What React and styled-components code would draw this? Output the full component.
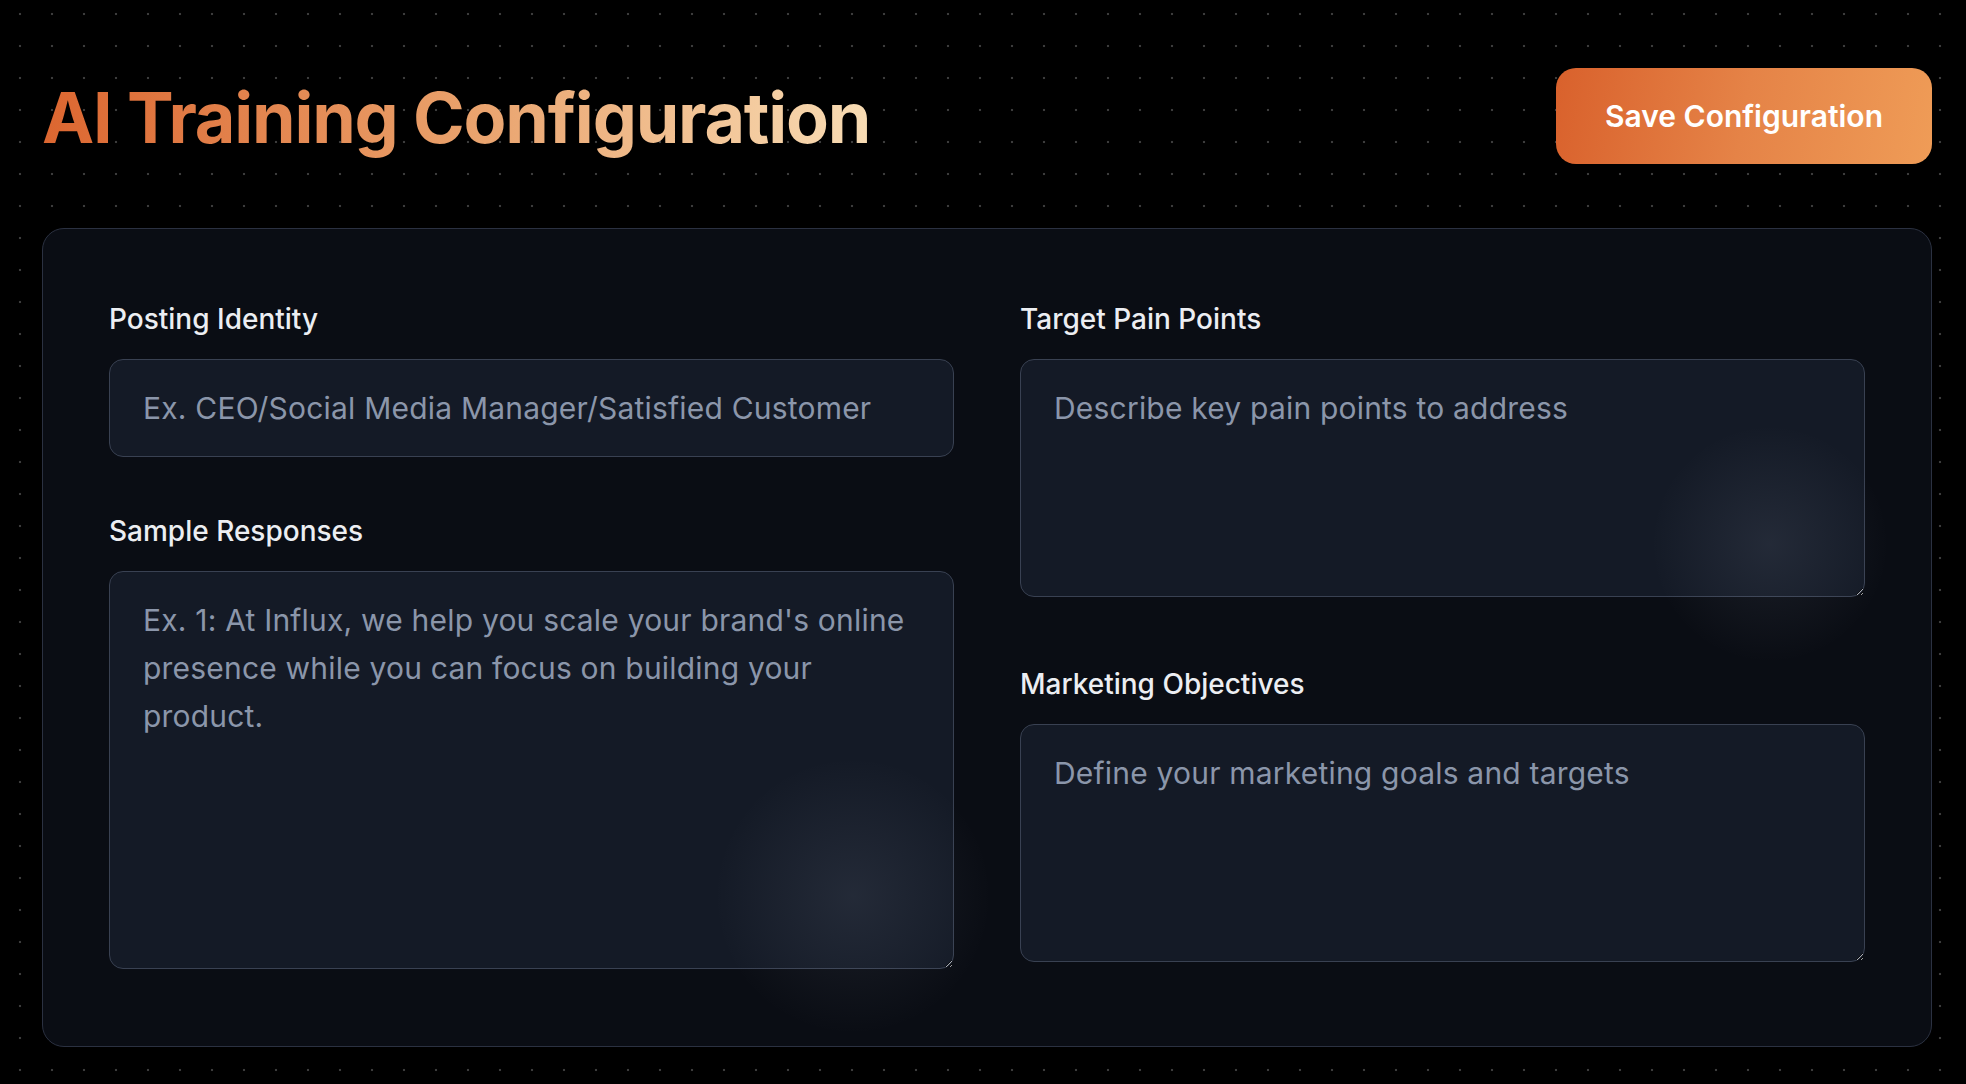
import React from "react";
import styled, { createGlobalStyle } from "styled-components";

const GlobalStyle = createGlobalStyle`
  html, body {
    margin: 0;
    padding: 0;
    background: #000;
  }
  body {
    font-family: Inter, "Noto Sans", sans-serif;
  }
  * {
    box-sizing: border-box;
  }
`;

const Page = styled.div`
  min-height: 100vh;
  background-color: #000;
  background-image: radial-gradient(circle at center, #3c3c3c 0, #3c3c3c 1px, transparent 1.6px);
  background-size: 32px 32px;
  background-position: 4px -2px;
  padding: 68px 34px 20px 42px;
`;

const Header = styled.header`
  display: flex;
  align-items: center;
  justify-content: space-between;
`;

const Title = styled.h1`
  margin: 0;
  font-size: 70px;
  font-weight: 700;
  line-height: 84px;
  letter-spacing: -1.2px;
  transform: translateY(2px);
  background: linear-gradient(90deg, #dc6630 0%, #e9a06a 50%, #f8dcb4 100%);
  -webkit-background-clip: text;
  background-clip: text;
  color: transparent;
`;

const SaveButton = styled.button`
  height: 96px;
  padding: 0 49px;
  border: none;
  border-radius: 20px;
  background: linear-gradient(100deg, #d9612c 0%, #e58347 50%, #ef9c57 100%);
  color: #fff;
  font-family: inherit;
  font-size: 30px;
  font-weight: 600;
  cursor: pointer;
`;

const Card = styled.section`
  margin-top: 64px;
  border: 1px solid #2b3141;
  border-radius: 22px;
  background: #0a0d14;
  padding: 69px 66px 77px 66px;
  display: grid;
  grid-template-columns: 1fr 1fr;
  column-gap: 66px;
  align-items: start;
`;

const Column = styled.div`
  display: flex;
  flex-direction: column;
`;

const Field = styled.div`
  position: relative;
  margin-top: ${(p) => p.$gap || 0}px;
`;

const Label = styled.label`
  display: block;
  font-size: 28px;
  font-weight: 500;
  line-height: 42px;
  color: #eceef2;
  margin-bottom: 19px;
`;

const controlStyles = `
  display: block;
  width: 100%;
  border: 1px solid #394152;
  border-radius: 14px;
  background: #141a26;
  color: #e5e7eb;
  font-family: Inter, "Noto Sans", sans-serif;
  font-size: 30px;
  line-height: 48px;
  letter-spacing: 0.2px;
  padding: 24px 33px;
  outline: none;
  &::placeholder {
    color: #8b96aa;
    opacity: 1;
  }
`;

const Input = styled.input`
  ${controlStyles}
  height: 98px;
`;

const TextArea = styled.textarea`
  ${controlStyles}
  height: ${(p) => p.$height}px;
  resize: vertical;
`;

const Glow = styled.div`
  position: absolute;
  pointer-events: none;
  border-radius: 50%;
  background: radial-gradient(circle, rgba(200, 212, 240, 0.085) 0%, rgba(200, 212, 240, 0.03) 45%, transparent 70%);
`;

export default function App() {
  return (
    <>
      <GlobalStyle />
      <Page>
        <Header>
          <Title>AI Training Configuration</Title>
          <SaveButton>Save Configuration</SaveButton>
        </Header>
        <Card>
          <Column>
            <Field>
              <Label>Posting Identity</Label>
              <Input placeholder="Ex. CEO/Social Media Manager/Satisfied Customer" />
            </Field>
            <Field $gap={53}>
              <Label>Sample Responses</Label>
              <TextArea
                $height={398}
                placeholder="Ex. 1: At Influx, we help you scale your brand's online presence while you can focus on building your product."
              />
              <Glow style={{ left: 604, top: 246, width: 280, height: 280 }} />
            </Field>
          </Column>
          <Column>
            <Field>
              <Label>Target Pain Points</Label>
              <TextArea $height={238} placeholder="Describe key pain points to address" />
              <Glow style={{ left: 630, top: 126, width: 240, height: 240 }} />
            </Field>
            <Field $gap={66}>
              <Label>Marketing Objectives</Label>
              <TextArea $height={238} placeholder="Define your marketing goals and targets" />
            </Field>
          </Column>
        </Card>
      </Page>
    </>
  );
}
